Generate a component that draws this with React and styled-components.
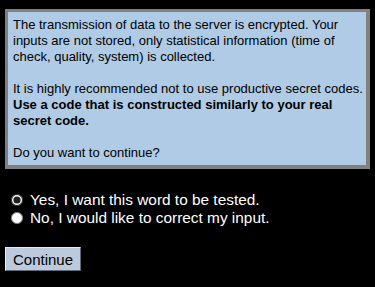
import React, { useState } from "react";
import styled, { createGlobalStyle } from "styled-components";

const GlobalStyle = createGlobalStyle`
  html, body {
    margin: 0;
    padding: 0;
    background: #000;
  }
  body {
    font-family: "Liberation Sans", Arial, sans-serif;
  }
`;

const Page = styled.div`
  padding: 9px 5px 0 5px;
  width: 365px;
`;

const Notice = styled.div`
  background: #afcbe5;
  border: 4px solid #808080;
  border-left-width: 3px;
  border-top-width: 3px;
  padding: 5px 0 4px 5px;
  color: #000;
  font-size: 13px;
  line-height: 16px;
`;

const Para = styled.p`
  margin: 0 0 16px 0;
  &:last-child {
    margin-bottom: 0;
  }
`;

const Options = styled.div`
  margin-top: 23px;
  display: flex;
  flex-direction: column;
  gap: 2px;
`;

const Option = styled.label`
  display: flex;
  align-items: center;
  gap: 7px;
  color: #fff;
  font-size: 15.4px;
  line-height: 16px;
  padding-left: 6px;
  cursor: pointer;
`;

const Radio = styled.input`
  margin: 0;
  width: 12px;
  height: 12px;
  accent-color: #222;
`;

const Button = styled.button`
  margin-top: 21px;
  width: 76px;
  height: 24px;
  background: #bccadb;
  border: 1px solid;
  border-color: #e4ecf4 #5c6a7a #5c6a7a #e4ecf4;
  font-family: "Liberation Sans", Arial, sans-serif;
  font-size: 15px;
  color: #000;
  padding: 0;
`;

export default function App() {
  const [choice, setChoice] = useState("yes");

  return (
    <>
      <GlobalStyle />
      <Page>
        <Notice>
          <Para>
            The transmission of data to the server is encrypted. Your inputs
            are not stored, only statistical information (time of check,
            quality, system) is collected.
          </Para>
          <Para>
            It is highly recommended not to use productive secret codes.
            <br />
            <b>Use a code that is constructed similarly to your real secret code.</b>
          </Para>
          <Para>Do you want to continue?</Para>
        </Notice>
        <Options>
          <Option>
            <Radio
              type="radio"
              name="test"
              checked={choice === "yes"}
              onChange={() => setChoice("yes")}
            />
            Yes, I want this word to be tested.
          </Option>
          <Option>
            <Radio
              type="radio"
              name="test"
              checked={choice === "no"}
              onChange={() => setChoice("no")}
            />
            No, I would like to correct my input.
          </Option>
        </Options>
        <Button>Continue</Button>
      </Page>
    </>
  );
}
